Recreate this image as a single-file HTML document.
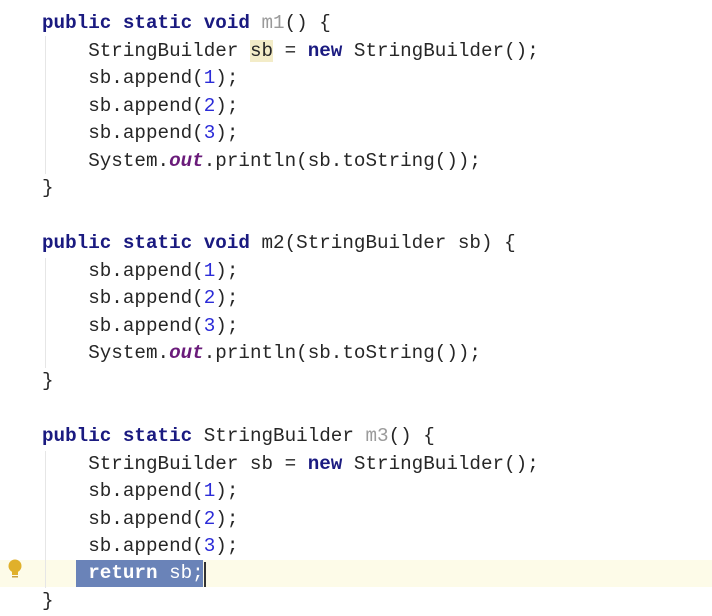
<!DOCTYPE html>
<html><head><style>
body{margin:0;width:712px;height:616px;background:#fff;position:relative;overflow:hidden;font-family:"Liberation Mono",monospace;}
.l{position:absolute;left:42px;height:27.5px;line-height:27.5px;font-size:19.25px;color:#262626;white-space:pre;}
.k{color:#1a1a80;font-weight:bold}
.n{color:#2b2bd8}
.g{color:#9a9a9a}
.o{color:#6a1b7a;font-weight:bold;font-style:italic}
.hl{background:#f3ecc8}
.guide{position:absolute;left:45px;width:1px;background:#e6e6e6}
</style></head><body>
<div style="position:absolute;left:0;top:560px;width:712px;height:27px;background:#fdfbe8"></div>
<div class="guide" style="top:36px;height:138px"></div>
<div class="guide" style="top:258px;height:110px"></div>
<div class="guide" style="top:451px;height:137px"></div>
<div style="position:absolute;left:76px;top:560px;width:127px;height:27px;background:#6a83b8"></div>
<div style="position:absolute;left:204px;top:562px;width:2px;height:25px;background:#333"></div>
<svg style="position:absolute;left:7px;top:558px" width="18" height="22"><circle cx="8" cy="8" r="6.5" fill="#e0b02a"/><rect x="5" y="13" width="6" height="4" fill="#e0b02a"/><rect x="5" y="18" width="6" height="1.5" fill="#c9a040"/></svg>
<div class="l" style="top:10px"><span class="k">public static void</span> <span class="g">m1</span>() {</div>
<div class="l" style="top:37.5px">    StringBuilder <span class="hl">sb</span> = <span class="k">new</span> StringBuilder();</div>
<div class="l" style="top:65px">    sb.append(<span class="n">1</span>);</div>
<div class="l" style="top:92.5px">    sb.append(<span class="n">2</span>);</div>
<div class="l" style="top:120px">    sb.append(<span class="n">3</span>);</div>
<div class="l" style="top:147.5px">    System.<span class="o">out</span>.println(sb.toString());</div>
<div class="l" style="top:175px">}</div>
<div class="l" style="top:230px"><span class="k">public static void</span> m2(StringBuilder sb) {</div>
<div class="l" style="top:257.5px">    sb.append(<span class="n">1</span>);</div>
<div class="l" style="top:285px">    sb.append(<span class="n">2</span>);</div>
<div class="l" style="top:312.5px">    sb.append(<span class="n">3</span>);</div>
<div class="l" style="top:340px">    System.<span class="o">out</span>.println(sb.toString());</div>
<div class="l" style="top:367.5px">}</div>
<div class="l" style="top:423px"><span class="k">public static</span> StringBuilder <span class="g">m3</span>() {</div>
<div class="l" style="top:450.5px">    StringBuilder sb = <span class="k">new</span> StringBuilder();</div>
<div class="l" style="top:478px">    sb.append(<span class="n">1</span>);</div>
<div class="l" style="top:505.5px">    sb.append(<span class="n">2</span>);</div>
<div class="l" style="top:533px">    sb.append(<span class="n">3</span>);</div>
<div class="l" style="top:560px;color:#fff">    <b>return</b> sb;</div>
<div class="l" style="top:588px">}</div>
</body></html>
